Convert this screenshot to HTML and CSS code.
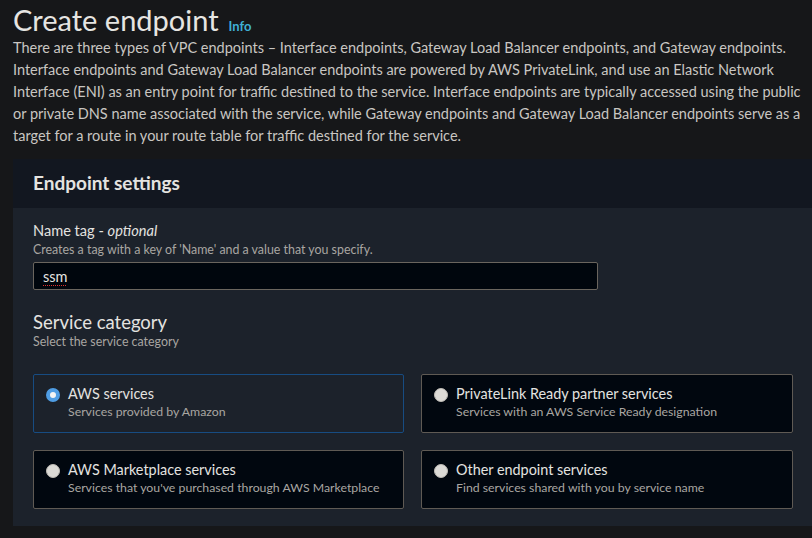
FILE: index.html
```html
<!DOCTYPE html>
<html lang="en">
<head>
<meta charset="utf-8">
<title>Create endpoint</title>
<link rel="stylesheet" href="styles.css">
</head>
<body>
<main class="page">
  <header class="page-head">
    <h1 class="title">Create endpoint <a class="info" href="#">Info</a></h1>
    <p class="intro">There are three types of VPC endpoints – Interface endpoints, Gateway Load Balancer endpoints, and Gateway endpoints. Interface endpoints and Gateway Load Balancer endpoints are powered by AWS PrivateLink, and use an Elastic Network Interface (ENI) as an entry point for traffic destined to the service. Interface endpoints are typically accessed using the public or private DNS name associated with the service, while Gateway endpoints and Gateway Load Balancer endpoints serve as a target for a route in your route table for traffic destined for the service.</p>
  </header>

  <section class="panel">
    <div class="panel-head">
      <h2 class="panel-title">Endpoint settings</h2>
    </div>
    <div class="panel-body">
      <div class="field">
        <label class="field-label" for="nametag">Name tag - <em>optional</em></label>
        <div class="field-desc">Creates a tag with a key of 'Name' and a value that you specify.</div>
        <div class="input"><span class="input-text">ssm</span></div>
      </div>

      <div class="group">
        <h3 class="group-title">Service category</h3>
        <div class="field-desc">Select the service category</div>
      </div>

      <div class="tiles">
        <div class="tile selected">
          <span class="radio on"></span>
          <div class="tile-text">
            <div class="tile-label">AWS services</div>
            <div class="tile-desc">Services provided by Amazon</div>
          </div>
        </div>
        <div class="tile">
          <span class="radio"></span>
          <div class="tile-text">
            <div class="tile-label">PrivateLink Ready partner services</div>
            <div class="tile-desc">Services with an AWS Service Ready designation</div>
          </div>
        </div>
        <div class="tile">
          <span class="radio"></span>
          <div class="tile-text">
            <div class="tile-label">AWS Marketplace services</div>
            <div class="tile-desc">Services that you've purchased through AWS Marketplace</div>
          </div>
        </div>
        <div class="tile">
          <span class="radio"></span>
          <div class="tile-text">
            <div class="tile-label">Other endpoint services</div>
            <div class="tile-desc">Find services shared with you by service name</div>
          </div>
        </div>
      </div>
    </div>
  </section>
</main>
</body>
</html>
```
FILE: styles.css
```css
* { box-sizing: border-box; }
html, body { margin: 0; padding: 0; }
body {
  background: #161719;
  color: #d5d3d0;
  font-family: Lato, "Open Sans", "Liberation Sans", sans-serif;
  overflow: hidden;
}
.page {
  width: 812px;
  padding: 0 0 0 13px;
}
.page-head {
  padding-right: 8px;
}
.title {
  margin: 0;
  padding-top: 3px;
  font-size: 29px;
  line-height: 34px;
  font-weight: 400;
  color: #e6e5e2;
  display: flex;
  align-items: baseline;
  gap: 10px;
}
.info {
  font-size: 13px;
  line-height: 1;
  font-weight: 700;
  color: #3fb0d4;
  text-decoration: none;
}
.intro {
  margin: 0;
  font-size: 14.5px;
  line-height: 22px;
  color: #c9c6c2;
}
.panel {
  margin-top: 12px;
  width: 812px;
}
.panel-head {
  background: #121720;
  height: 49px;
  padding: 12px 20px 0;
}
.panel-title {
  margin: 0;
  font-size: 19px;
  line-height: 24px;
  font-weight: 700;
  color: #e4e3e0;
}
.panel-body {
  background: #1c222b;
  padding: 12px 20px 17px;
}
.field-label {
  display: block;
  font-size: 14.6px;
  line-height: 22px;
  color: #e4e3e0;
}
.field-label em { font-style: italic; }
.field-desc {
  font-size: 12.4px;
  line-height: 16px;
  color: #a9a6a2;
}
.input {
  margin-top: 4px;
  width: 565px;
  height: 28px;
  background: #00060d;
  border: 1px solid #6a655e;
  border-radius: 2px;
  padding: 0 9px;
  display: flex;
  align-items: center;
  font-size: 14.5px;
  color: #e4e3e0;
}
.input-text {
  text-decoration: underline dotted #e0312f;
  text-decoration-thickness: 1px;
  text-underline-offset: 3px;
}
.group { margin-top: 20px; }
.group-title {
  margin: 0;
  font-size: 18.5px;
  line-height: 24px;
  font-weight: 400;
  color: #e4e3e0;
}
.tiles {
  margin-top: 24px;
  display: grid;
  grid-template-columns: 371px 372px;
  gap: 17px;
}
.tile {
  height: 59px;
  border: 1px solid #5f5a54;
  border-radius: 2px;
  background: #01070f;
  padding: 9px 12px 0;
  display: flex;
  gap: 8px;
}
.tile.selected {
  background: #1c222b;
  border-color: #174c82;
}
.radio {
  flex: none;
  width: 14px;
  height: 14px;
  margin-top: 4px;
  border-radius: 50%;
  background: #dcdad6;
  border: 1px solid #bdbab5;
}
.radio.on {
  background: #f4f4f4;
  border: 4px solid #4f9de4;
}
.tile-label {
  font-size: 14.4px;
  line-height: 20px;
  color: #e4e3e0;
}
.tile-desc {
  font-size: 12.3px;
  line-height: 16px;
  color: #a9a6a2;
}
```
